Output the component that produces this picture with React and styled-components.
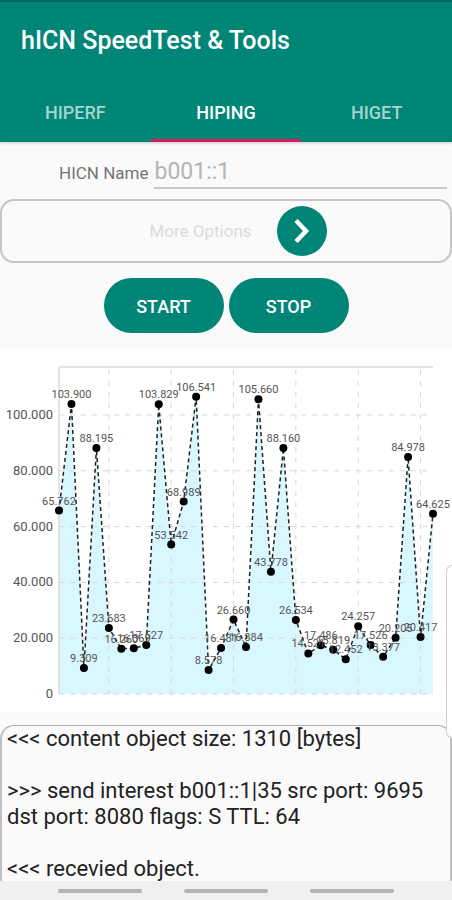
import React from 'react';
import styled, {createGlobalStyle} from "styled-components";

const GlobalStyle = createGlobalStyle`
  * {
    box-sizing: border-box;
  }
  body {
    margin: 0;
    background: #fafafa;
    font-family: Roboto, "Liberation Sans", sans-serif;
  }
`
const Container = styled.div`
  position: relative;
  display: flex;
  flex-direction: column;
  height: 100vh;
  overflow: hidden;
`
const Header = styled.header`
  flex-shrink: 0;
  background-color: #008577;
  border-top: 2px solid #00695e;
  box-shadow: 0 1px 3px rgba(0, 0, 0, 0.2);
`
const Title = styled.h1`
  margin: 0;
  padding: 2px 21px 0;
  font-size: 25px;
  font-weight: 500;
  line-height: 74px;
  color: white;
`
const Tabs = styled.nav`
  display: flex;
`
const Tab = styled.button`
  flex: 1;
  height: 64px;
  padding: 8px 0 0;
  border: none;
  border-bottom: 3px solid ${props => props.$active ? "#d81b60" : "transparent"};
  background: none;
  font-family: inherit;
  font-size: 18px;
  font-weight: 500;
  color: ${props => props.$active ? "white" : "#a6d5cf"};
  cursor: pointer;
`
const Field = styled.div`
  display: flex;
  flex-shrink: 0;
  align-items: center;
  gap: 6px;
  padding: 10px 5px 10px 59px;
`
const Label = styled.label`
  padding-top: 4px;
  font-size: 17px;
  color: #757575;
`
const Input = styled.input`
  flex: 1;
  min-width: 0;
  height: 37px;
  padding: 4px 0 0;
  border: none;
  border-bottom: 2px solid #c8c8c8;
  background: none;
  font-family: inherit;
  font-size: 23px;
  color: #757575;
  outline: none;
  &::placeholder {
    color: #b4b4b4;
  }
`
const Options = styled.section`
  display: flex;
  flex-shrink: 0;
  align-items: center;
  justify-content: center;
  gap: 25px;
  height: 64px;
  padding-left: 24px;
  border: 2px solid #c6c6c6;
  border-radius: 14px;
`
const OptionsText = styled.span`
  font-size: 17px;
  color: #dadada;
`
const RoundButton = styled.button`
  display: flex;
  align-items: center;
  justify-content: center;
  width: 50px;
  height: 50px;
  padding: 0;
  border: none;
  border-radius: 50%;
  background-color: #008577;
  cursor: pointer;
`
const Actions = styled.div`
  display: flex;
  flex-shrink: 0;
  justify-content: center;
  gap: 5px;
  padding: 15px 0;
`
const Button = styled.button`
  width: 120px;
  height: 55px;
  padding: 2px 0 0;
  border: none;
  border-radius: 28px;
  background-color: #008577;
  font-family: inherit;
  font-size: 18px;
  font-weight: 500;
  color: white;
  cursor: pointer;
`
const ChartPanel = styled.section`
  flex-shrink: 0;
  background-color: white;
`
const ChartSvg = styled.svg`
  display: block;
  width: 100%;
  font-family: inherit;
`
const AxisText = styled.text`
  font-size: 13px;
  fill: #555;
  text-anchor: end;
`
const ValueText = styled.text`
  font-size: 11px;
  fill: #555;
  text-anchor: middle;
`
const Log = styled.section`
  flex: 1;
  min-height: 0;
  margin-top: 13px;
  padding: 0 5px;
  border: 2px solid #c0c0c0;
  border-top: 1px solid #b0b0b0;
  border-bottom: none;
  border-radius: 14px 14px 0 0;
  overflow: hidden;
  font-size: 22px;
  line-height: 26px;
  color: #222;
  white-space: pre-wrap;
`
const NavBar = styled.nav`
  display: flex;
  flex-shrink: 0;
  justify-content: center;
  gap: 42px;
  height: 19px;
  padding-top: 8px;
  background-color: #f0f0f0;
`
const NavButton = styled.button`
  width: 84px;
  height: 4px;
  padding: 0;
  border: none;
  border-radius: 2px;
  background-color: #b3b3b3;
`
const EdgeHandle = styled.aside`
  position: absolute;
  top: 565px;
  right: 0;
  width: 6px;
  height: 173px;
  border: 1px solid #d0d0d0;
  border-right: none;
  border-radius: 6px 0 0 6px;
  background-color: white;
`

const values = [
    65.762, 103.9, 9.309, 88.195, 23.683, 16.26, 16.369, 17.527,
    103.829, 53.542, 68.989, 106.541, 8.578, 16.481, 26.66, 16.884,
    105.66, 43.778, 88.16, 26.534, 14.521, 17.486, 15.819, 12.452,
    24.257, 17.526, 13.377, 20.205, 84.978, 20.417, 64.625
]
const left = 59
const right = 433
const top = 19
const bottom = 346
const x = i => left + i * (right - left) / (values.length - 1)
const y = v => bottom - v * 2.79

const Chart = () => {
    const line = values.map((v, i) => `${x(i)},${y(v)}`).join(" ")
    return (
        <ChartSvg viewBox="0 0 452 364" role="img" aria-label="HIPING">
            <polygon points={`${left},${bottom} ${line} ${right},${bottom}`} fill="#d9f7ff"/>
            <g stroke="#d3d8da" strokeWidth="1" strokeDasharray="5 6">
                {[0, 20, 40, 60, 80, 100].map(v => (
                    <line key={v} x1={left} x2={right} y1={y(v)} y2={y(v)}/>
                ))}
                {[4, 9, 14, 19, 24, 29].map(i => (
                    <line key={i} x1={x(i)} x2={x(i)} y1={bottom} y2={top}/>
                ))}
            </g>
            <path d={`M${left} ${bottom}V${top}H${right}`} fill="none" stroke="#dcdcdc" strokeWidth="1.5"/>
            <polyline points={line} fill="none" stroke="#222" strokeWidth="1.5" strokeDasharray="4 3"/>
            {values.map((v, i) => (
                <circle key={i} cx={x(i)} cy={y(v)} r="4"/>
            ))}
            {values.map((v, i) => (
                <ValueText key={i} x={x(i)} y={y(v) - 6}>{v.toFixed(3)}</ValueText>
            ))}
            {[0, 20, 40, 60, 80, 100].map(v => (
                <AxisText key={v} x="53" y={y(v) + 4}>{v ? v.toFixed(3) : "0"}</AxisText>
            ))}
        </ChartSvg>
    )
}

const log = `<<< content object size: 1310 [bytes]

>>> send interest b001::1|35 src port: 9695 dst port: 8080 flags: S TTL: 64

<<< recevied object.`

const App = () => {
    return (
        <Container>
            <GlobalStyle/>
            <Header>
                <Title>hICN SpeedTest &amp; Tools</Title>
                <Tabs>
                    <Tab>HIPERF</Tab>
                    <Tab $active>HIPING</Tab>
                    <Tab>HIGET</Tab>
                </Tabs>
            </Header>
            <Field>
                <Label htmlFor="name">HICN Name</Label>
                <Input id="name" placeholder="b001::1"/>
            </Field>
            <Options>
                <OptionsText>More Options</OptionsText>
                <RoundButton aria-label="More Options">
                    <svg width="18" height="26" viewBox="0 0 18 26">
                        <path d="M3 2.5L13 13L3 23.5" fill="none" stroke="white" strokeWidth="4.5"/>
                    </svg>
                </RoundButton>
            </Options>
            <Actions>
                <Button>START</Button>
                <Button>STOP</Button>
            </Actions>
            <ChartPanel>
                <Chart/>
            </ChartPanel>
            <Log>{log}</Log>
            <NavBar>
                <NavButton aria-label="Recents"/>
                <NavButton aria-label="Home"/>
                <NavButton aria-label="Back"/>
            </NavBar>
            <EdgeHandle/>
        </Container>
    )
}
export default App
